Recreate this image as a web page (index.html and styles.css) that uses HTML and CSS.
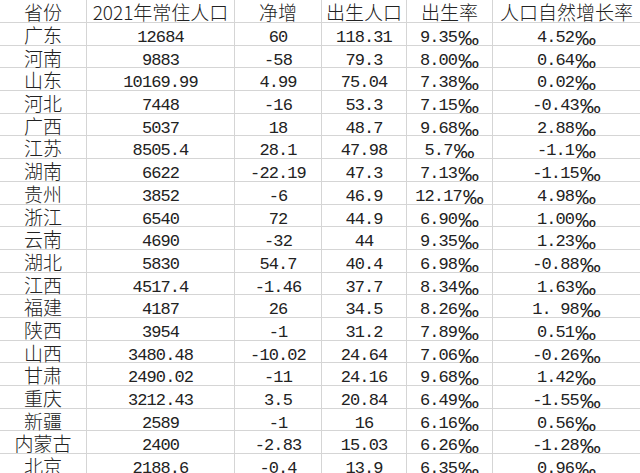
FILE: index.html
```html
<!DOCTYPE html>
<html lang="zh-CN">
<head>
<meta charset="utf-8">
<title>2021年各省人口数据</title>
<link rel="stylesheet" href="styles.css">
</head>
<body>
<div class="sheet">
  <div class="c h">省份</div><div class="c h">2021年常住人口</div><div class="c h">净增</div><div class="c h">出生人口</div><div class="c h">出生率</div><div class="c h last">人口自然增长率</div>

  <div class="c p">广东</div><div class="c n">12684</div><div class="c n">60</div><div class="c n">118.31</div><div class="c n">9.35<span class="pm">‰</span></div><div class="c n last">4.52<span class="pm">‰</span></div>
  <div class="c p">河南</div><div class="c n">9883</div><div class="c n">-58</div><div class="c n">79.3</div><div class="c n">8.00<span class="pm">‰</span></div><div class="c n last">0.64<span class="pm">‰</span></div>
  <div class="c p">山东</div><div class="c n">10169.99</div><div class="c n">4.99</div><div class="c n">75.04</div><div class="c n">7.38<span class="pm">‰</span></div><div class="c n last">0.02<span class="pm">‰</span></div>
  <div class="c p">河北</div><div class="c n">7448</div><div class="c n">-16</div><div class="c n">53.3</div><div class="c n">7.15<span class="pm">‰</span></div><div class="c n last">-0.43<span class="pm">‰</span></div>
  <div class="c p">广西</div><div class="c n">5037</div><div class="c n">18</div><div class="c n">48.7</div><div class="c n">9.68<span class="pm">‰</span></div><div class="c n last">2.88<span class="pm">‰</span></div>
  <div class="c p">江苏</div><div class="c n">8505.4</div><div class="c n">28.1</div><div class="c n">47.98</div><div class="c n">5.7<span class="pm">‰</span></div><div class="c n last">-1.1<span class="pm">‰</span></div>
  <div class="c p">湖南</div><div class="c n">6622</div><div class="c n">-22.19</div><div class="c n">47.3</div><div class="c n">7.13<span class="pm">‰</span></div><div class="c n last">-1.15<span class="pm">‰</span></div>
  <div class="c p">贵州</div><div class="c n">3852</div><div class="c n">-6</div><div class="c n">46.9</div><div class="c n">12.17<span class="pm">‰</span></div><div class="c n last">4.98<span class="pm">‰</span></div>
  <div class="c p">浙江</div><div class="c n">6540</div><div class="c n">72</div><div class="c n">44.9</div><div class="c n">6.90<span class="pm">‰</span></div><div class="c n last">1.00<span class="pm">‰</span></div>
  <div class="c p">云南</div><div class="c n">4690</div><div class="c n">-32</div><div class="c n">44</div><div class="c n">9.35<span class="pm">‰</span></div><div class="c n last">1.23<span class="pm">‰</span></div>
  <div class="c p">湖北</div><div class="c n">5830</div><div class="c n">54.7</div><div class="c n">40.4</div><div class="c n">6.98<span class="pm">‰</span></div><div class="c n last">-0.88<span class="pm">‰</span></div>
  <div class="c p">江西</div><div class="c n">4517.4</div><div class="c n">-1.46</div><div class="c n">37.7</div><div class="c n">8.34<span class="pm">‰</span></div><div class="c n last">1.63<span class="pm">‰</span></div>
  <div class="c p">福建</div><div class="c n">4187</div><div class="c n">26</div><div class="c n">34.5</div><div class="c n">8.26<span class="pm">‰</span></div><div class="c n last">1.&nbsp;98<span class="pm">‰</span></div>
  <div class="c p">陕西</div><div class="c n">3954</div><div class="c n">-1</div><div class="c n">31.2</div><div class="c n">7.89<span class="pm">‰</span></div><div class="c n last">0.51<span class="pm">‰</span></div>
  <div class="c p">山西</div><div class="c n">3480.48</div><div class="c n">-10.02</div><div class="c n">24.64</div><div class="c n">7.06<span class="pm">‰</span></div><div class="c n last">-0.26<span class="pm">‰</span></div>
  <div class="c p">甘肃</div><div class="c n">2490.02</div><div class="c n">-11</div><div class="c n">24.16</div><div class="c n">9.68<span class="pm">‰</span></div><div class="c n last">1.42<span class="pm">‰</span></div>
  <div class="c p">重庆</div><div class="c n">3212.43</div><div class="c n">3.5</div><div class="c n">20.84</div><div class="c n">6.49<span class="pm">‰</span></div><div class="c n last">-1.55<span class="pm">‰</span></div>
  <div class="c p">新疆</div><div class="c n">2589</div><div class="c n">-1</div><div class="c n">16</div><div class="c n">6.16<span class="pm">‰</span></div><div class="c n last">0.56<span class="pm">‰</span></div>
  <div class="c p">内蒙古</div><div class="c n">2400</div><div class="c n">-2.83</div><div class="c n">15.03</div><div class="c n">6.26<span class="pm">‰</span></div><div class="c n last">-1.28<span class="pm">‰</span></div>
  <div class="c p">北京</div><div class="c n">2188.6</div><div class="c n">-0.4</div><div class="c n">13.9</div><div class="c n">6.35<span class="pm">‰</span></div><div class="c n last">0.96<span class="pm">‰</span></div>
</div>
</body>
</html>
```

FILE: styles.css
```css
html, body {
  margin: 0;
  padding: 0;
  background: #ffffff;
}

body {
  width: 640px;
  height: 473px;
  overflow: hidden;
  color: #222222;
  font-family: "Noto Sans CJK SC", "Noto Sans", sans-serif;
}

.sheet {
  display: grid;
  grid-template-columns: 87px 148px 87px 85px 86px 147px;
  grid-template-rows: 23px;
  grid-auto-rows: 22.7px;
}

.c {
  box-sizing: border-box;
  border-right: 1px solid #d5d5d5;
  border-bottom: 1px solid #d5d5d5;
  display: flex;
  align-items: flex-start;
  justify-content: center;
  white-space: nowrap;
}

.c.last {
  border-right: none;
}

.h, .p {
  font-family: "Noto Sans CJK SC", sans-serif;
  font-size: 19px;
  font-weight: 300;
  line-height: 20px;
  padding-top: 2px;
}

.n {
  font-family: "Liberation Mono", "DejaVu Sans Mono", monospace;
  font-size: 17px;
  letter-spacing: -0.9px;
  line-height: 15px;
  padding-top: 7px;
}

.pm {
  font-family: "Liberation Sans", "Noto Sans", sans-serif;
  font-size: 21px;
  letter-spacing: 0;
  margin-left: 1px;
  line-height: 15px;
}
```
